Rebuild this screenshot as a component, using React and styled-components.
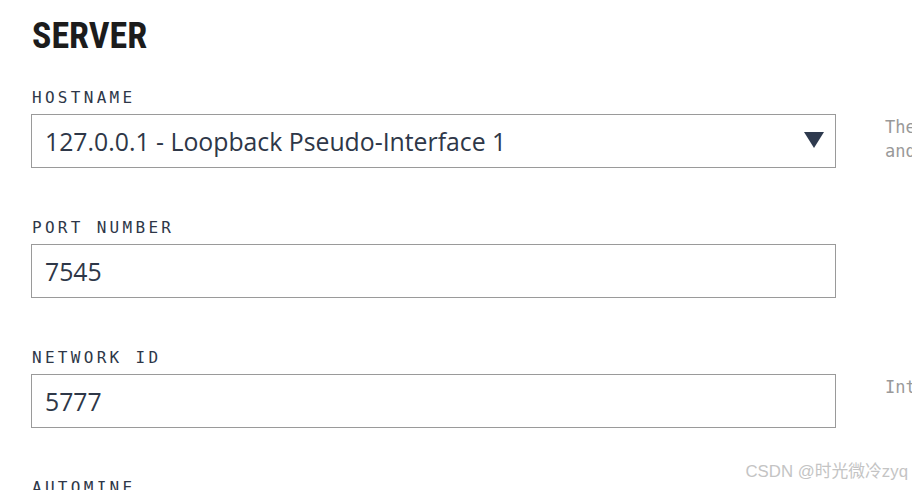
import React from 'react'
import styled, { createGlobalStyle } from 'styled-components'

const GlobalStyle = createGlobalStyle`
  html, body {
    margin: 0;
    padding: 0;
    background: #ffffff;
    overflow: hidden;
  }
  body {
    width: 912px;
    height: 490px;
  }
`

const Page = styled.div`
  position: relative;
  width: 912px;
  height: 490px;
  overflow: hidden;
  padding: 14px 0 0 31px;
  box-sizing: border-box;
`

const Title = styled.h1`
  margin: 0 0 30px 1px;
  font-family: "Roboto Condensed", "Liberation Sans Narrow", "DejaVu Sans Condensed", Roboto, sans-serif;
  font-weight: 700;
  font-size: 36px;
  line-height: 44px;
  color: #1c1c1c;
`

const Row = styled.div`
  display: grid;
  grid-template-columns: 805px 260px;
  column-gap: 49px;
  margin-bottom: 50px;
`

const Field = styled.div`
  display: flex;
  flex-direction: column;
`

const Label = styled.label`
  font-family: "DejaVu Sans Mono", "Liberation Mono", monospace;
  font-size: 16px;
  line-height: 20px;
  letter-spacing: 3.3px;
  color: #2e3748;
  margin: 0 0 6px 1px;
`

const Box = styled.div`
  position: relative;
  display: flex;
  align-items: center;
  height: 54px;
  box-sizing: border-box;
  border: 1px solid #9a9a9a;
  padding: 0 13px;
  font-family: "Open Sans", "Noto Sans", sans-serif;
  font-size: 24.8px;
  color: #2e3748;
`

const Caret = styled.svg`
  position: absolute;
  right: 11px;
  top: 16px;
`

const Help = styled.div`
  padding-top: 27px;
  font-family: "DejaVu Sans Mono", "Liberation Mono", monospace;
  font-size: 17px;
  line-height: 24px;
  color: #999999;
  white-space: nowrap;
`

const Watermark = styled.div`
  position: absolute;
  right: 4px;
  bottom: 8px;
  font-family: "Liberation Sans", "Noto Sans CJK SC", sans-serif;
  font-size: 16.8px;
  color: #c4c4c4;
`

function App() {
  return (
    <Page>
      <GlobalStyle />
      <Title>SERVER</Title>
      <Row>
        <Field>
          <Label>HOSTNAME</Label>
          <Box>
            127.0.0.1 - Loopback Pseudo-Interface 1
            <Caret width="20" height="18" viewBox="0 0 20 18">
              <polygon points="0,1 20,1 10,17" fill="#2e3a4e" />
            </Caret>
          </Box>
        </Field>
        <Help>
          The hostname and
          <br />
          and
        </Help>
      </Row>
      <Row>
        <Field>
          <Label>PORT NUMBER</Label>
          <Box>7545</Box>
        </Field>
        <Help />
      </Row>
      <Row>
        <Field>
          <Label>NETWORK ID</Label>
          <Box>5777</Box>
        </Field>
        <Help>Internal</Help>
      </Row>
      <Row>
        <Field>
          <Label>AUTOMINE</Label>
        </Field>
        <Help />
      </Row>
      <Watermark>CSDN @时光微冷zyq</Watermark>
    </Page>
  )
}

export default App
